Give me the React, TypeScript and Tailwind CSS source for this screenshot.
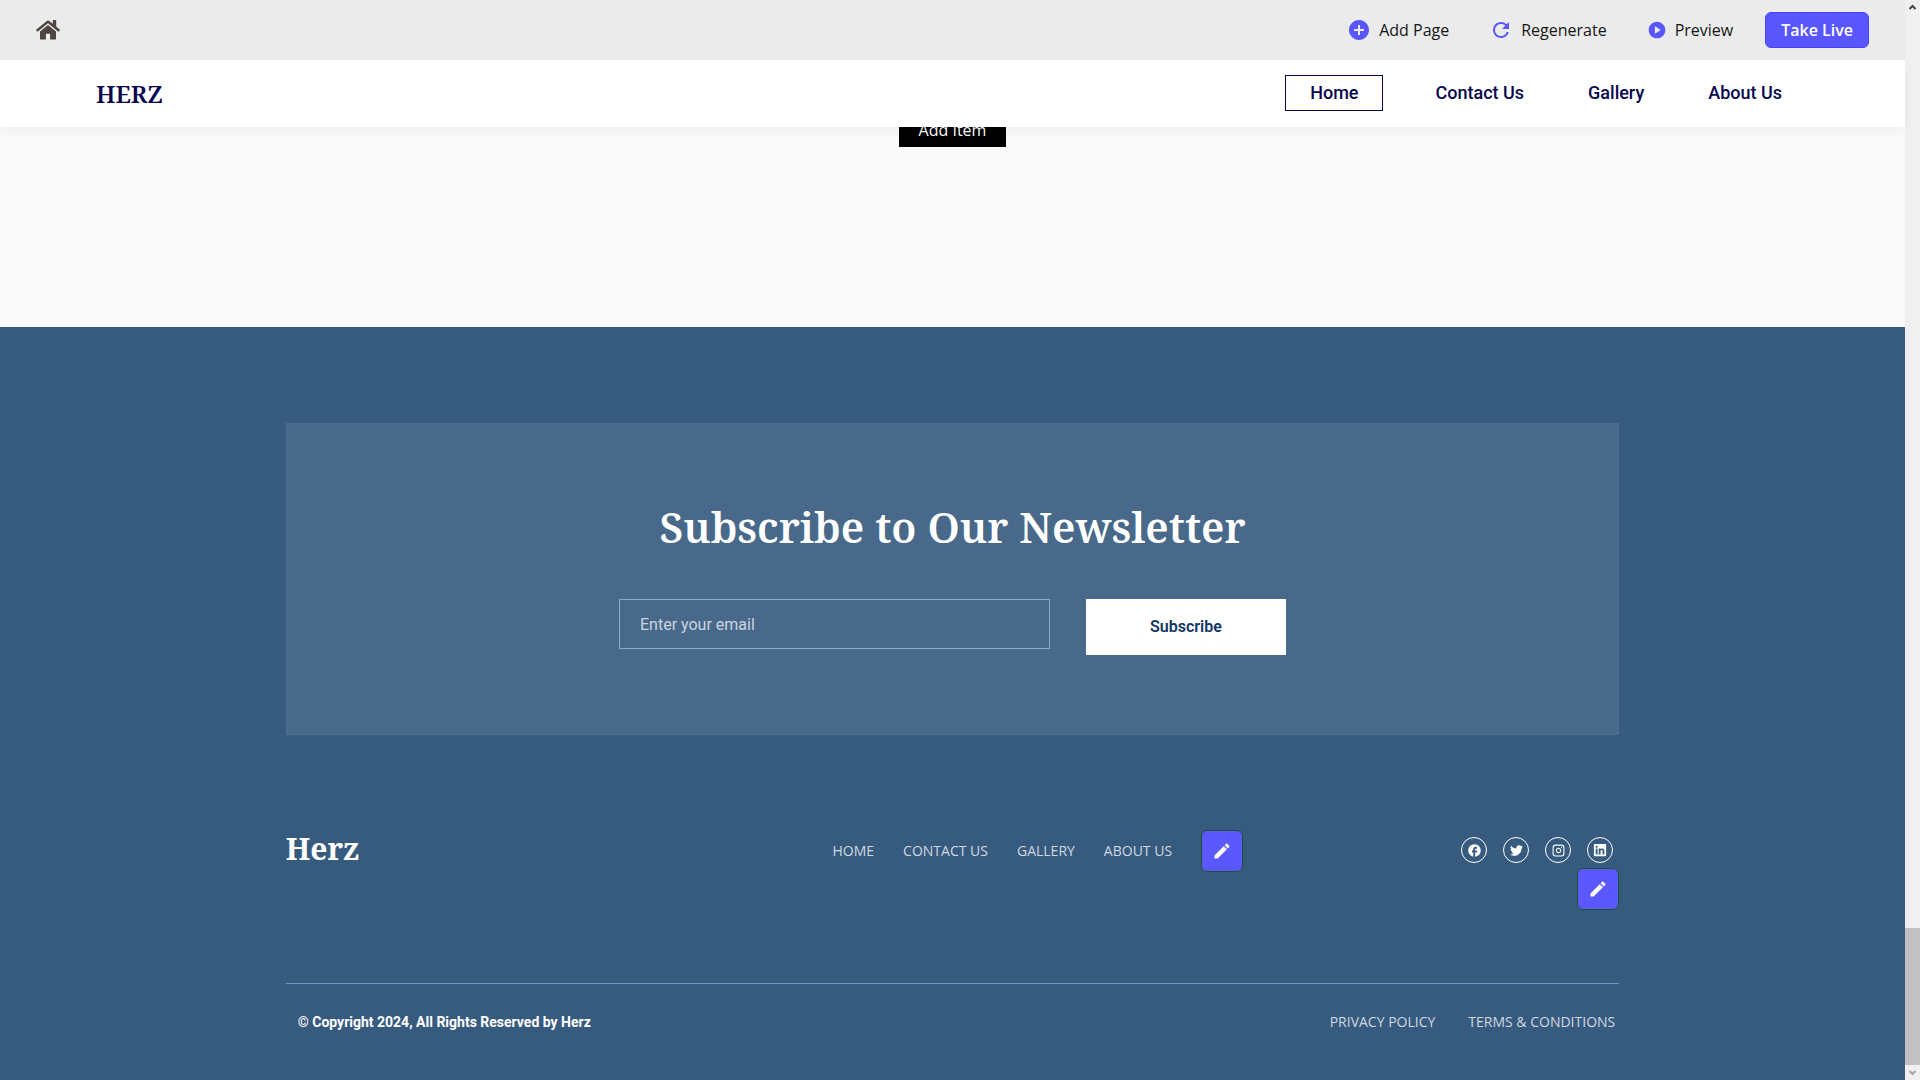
import type { ReactNode } from "react";
import { MdAddCircle, MdRefresh, MdPlayCircle, MdEdit, MdFacebook } from "react-icons/md";
import { FaTwitter, FaLinkedin } from "react-icons/fa";
import { FiInstagram } from "react-icons/fi";

function HomeIcon() {
  return (
    <svg viewBox="0 0 24 20" className="h-5 w-6 fill-[#4f4545]">
      <path d="M12 0.4c-.5 0-.9.2-1.2.5L.4 9.4c-.4.3-.4.7-.2 1l.7.9c.3.3.7.3 1 .1L12 3.2l10.1 8.2c.3.2.7.2 1-.1l.7-.9c.2-.3.2-.7-.2-1L20.2 6.6V.6c0-.3-.2-.5-.5-.5h-2.4c-.3 0-.5.2-.5.5v3.2L13.2.9C12.900.6 12.500.4 12 .4z" />
      <path d="M12 5 4 11.600V18.900c0 .4.3.700.7.700h5.200v-5.800h4.200v5.800h5.200c.4 0 .7-.3.7-.700V11.600z" />
    </svg>
  );
}

function ToolButton({ icon, children }: { icon: ReactNode; children: ReactNode }) {
  return (
    <button type="button" className="flex items-center gap-2 text-base text-[#151515]">
      {icon}
      {children}
    </button>
  );
}

function Toolbar() {
  return (
    <div className="flex h-[60px] items-center justify-between bg-[#ebebeb] px-9">
      <a href="#" aria-label="Dashboard">
        <HomeIcon />
      </a>
      <div className="flex items-center">
        <div className="mr-8 flex items-center gap-10">
          <ToolButton icon={<MdAddCircle className="size-6 text-[#5956ff]" />}>Add Page</ToolButton>
          <ToolButton icon={<MdRefresh className="size-6 text-[#5956ff]" />}>Regenerate</ToolButton>
          <ToolButton icon={<MdPlayCircle className="size-5 text-[#5956ff]" />}>Preview</ToolButton>
        </div>
        <button type="button" className="h-9 rounded-md border border-[#4643ff] bg-[#5956ff] px-[15px] text-base font-semibold text-white">
          Take Live
        </button>
      </div>
    </div>
  );
}

const navItems = ["Contact Us", "Gallery", "About Us"];

function SiteHeader() {
  return (
    <header className="relative z-10 flex h-[67px] items-center justify-between bg-white px-24 shadow-[0_4px_12px_rgba(0,0,0,0.05)]">
      <a href="#" className="font-['Noto_Serif','DejaVu_Serif_Condensed','DejaVu_Serif',serif] text-2xl font-semibold text-[#07074d]">
        HERZ
      </a>
      <nav className="mr-[27px] flex items-center gap-16 pb-px font-[Roboto,sans-serif] text-lg font-medium text-[#07074d]">
        <a href="#" className="-mr-3 flex h-9 items-center border border-[#07074d] px-6">
          Home
        </a>
        {navItems.map((item) => (
          <a key={item} href="#">
            {item}
          </a>
        ))}
      </nav>
    </header>
  );
}

function Newsletter() {
  return (
    <section className="border border-[#4d6e8f] bg-[#48698a] pt-[71px] pb-[79px]">
      <h2 className="text-center font-['Noto_Serif','DejaVu_Serif_Condensed','DejaVu_Serif',serif] text-[42px] leading-[64px] font-semibold text-white">
        Subscribe to Our Newsletter
      </h2>
      <form className="mt-10 flex items-start justify-center gap-9 font-[Roboto,sans-serif]">
        <input
          type="email"
          aria-label="Email"
          placeholder="Enter your email"
          className="h-[50px] w-[431px] border border-[#86acd2] bg-transparent px-5 text-base text-white placeholder:text-[#cbd5e0]"
        />
        <button type="button" className="h-14 w-[200px] bg-white text-base font-semibold text-[#113663]">
          Subscribe
        </button>
      </form>
    </section>
  );
}

function EditButton({ label }: { label: string }) {
  return (
    <button
      type="button"
      aria-label={label}
      className="flex size-[42px] items-center justify-center rounded-md border border-[#1f5432] bg-[#5b58ff] text-white"
    >
      <MdEdit className="size-5" />
    </button>
  );
}

const socials = [
  { label: "Facebook", icon: <MdFacebook className="size-[15px]" /> },
  { label: "Twitter", icon: <FaTwitter className="size-[13px]" /> },
  { label: "Instagram", icon: <FiInstagram className="size-[13px]" /> },
  { label: "LinkedIn", icon: <FaLinkedin className="size-[14px]" /> },
];

const footerLinks = ["HOME", "CONTACT US", "GALLERY", "ABOUT US"];

function Footer() {
  return (
    <footer className="flex-1 bg-[#375b7e] px-[15%] pt-24 pb-12">
      <Newsletter />
      <div className="mt-[95px] flex items-start">
        <div className="w-[41%] font-['Noto_Serif','DejaVu_Serif_Condensed','DejaVu_Serif',serif] text-[30px] leading-[38px] font-bold text-white">
          Herz
        </div>
        <nav className="flex items-center gap-[29px] text-sm text-[#cfd8e2]">
          {footerLinks.map((item) => (
            <a key={item} href="#">
              {item}
            </a>
          ))}
          <EditButton label="Edit links" />
        </nav>
        <div className="flex flex-1 flex-col items-end pt-[7px]">
          <div className="mr-[6px] flex gap-4">
            {socials.map((s) => (
              <a
                key={s.label}
                href="#"
                aria-label={s.label}
                className="flex size-[26px] items-center justify-center rounded-full border border-white text-white"
              >
                {s.icon}
              </a>
            ))}
          </div>
          <div className="mt-[5px]">
            <EditButton label="Edit social links" />
          </div>
        </div>
      </div>
      <div className="mt-[73px] flex items-center justify-between border-t border-[#6d9bc9] pt-7 pr-1 pl-3">
        <p className="font-[Roboto,sans-serif] text-sm font-bold text-white">© Copyright 2024, All Rights Reserved by Herz</p>
        <div className="flex gap-[33px] text-sm text-[#cfd8e2]">
          <a href="#">PRIVACY POLICY</a>
          <a href="#">TERMS &amp; CONDITIONS</a>
        </div>
      </div>
    </footer>
  );
}

function ScrollTrack() {
  return (
    <div aria-hidden="true" className="flex w-[15px] shrink-0 flex-col items-center bg-[#f0f0f0]">
      <svg viewBox="0 0 15 15" className="size-[15px]" fill="none" stroke="#444" strokeWidth="2">
        <path d="M4.5 9 7.5 6l3 3" />
      </svg>
      <div className="flex-1" />
      <div className="h-[137px] w-full bg-[#c1c1c1]" />
      <svg viewBox="0 0 15 15" className="size-[15px]" fill="none" stroke="#a5a5a5" strokeWidth="2">
        <path d="M4.5 6l3 3 3-3" />
      </svg>
    </div>
  );
}

export default function App() {
  return (
    <div className="flex min-h-screen font-['Open_Sans',sans-serif]">
      <div className="flex flex-1 flex-col">
        <Toolbar />
        <SiteHeader />
        <main className="flex h-[200px] items-start justify-center bg-[#fafafa]">
          <button type="button" className="-mt-[14px] h-[34px] bg-black px-5 text-base text-white">
            Add Item
          </button>
        </main>
        <Footer />
      </div>
      <ScrollTrack />
    </div>
  );
}
